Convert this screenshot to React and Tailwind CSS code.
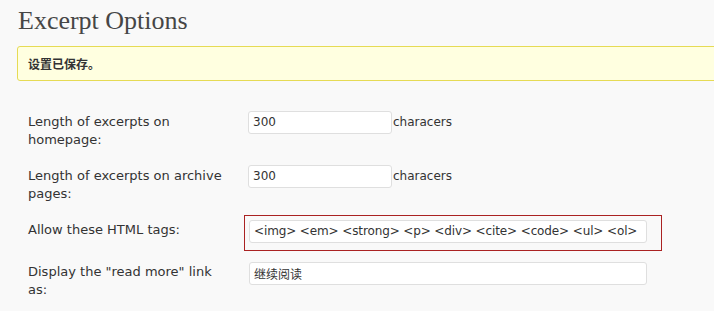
export default function App() {
  const sans = { fontFamily: '"DejaVu Sans", Verdana, "Noto Sans CJK SC", sans-serif' };
  return (
    <div className="w-[714px] h-[311px] overflow-hidden bg-[#f9f9f9] text-[#333]" style={sans}>
      <h2 className="pl-[18px] pt-[4px] h-[46px] text-[26px] leading-[34px] text-[#464646]" style={{ fontFamily: '"Liberation Serif", Georgia, serif' }}>
        Excerpt Options
      </h2>
      <div className="ml-[17px] -mr-[6px] h-[35px] rounded-[3px] border border-[#e6db55] bg-[#ffffe0] pl-[10px] flex items-center">
        <span className="text-[12px] font-bold text-[#333]" style={{ fontFamily: '"Noto Sans CJK SC", sans-serif' }}>设置已保存。</span>
      </div>

      <div className="mt-[30px] flex flex-col">
        <div className="flex h-[54px]">
          <div className="ml-[28px] w-[200px] mt-[2px] text-[13px] leading-[18px]">Length of excerpts on homepage:</div>
          <div className="ml-[20px] flex items-start">
            <div className="w-[144px] h-[23px] rounded-[3px] border border-[#dfdfdf] bg-white pl-[4px] text-[12px] leading-[21px]">300</div>
            <span className="ml-[1px] text-[12px] leading-[23px]">characers</span>
          </div>
        </div>
        <div className="flex h-[50px]">
          <div className="ml-[28px] w-[200px] mt-[2px] text-[13px] leading-[18px]">Length of excerpts on archive pages:</div>
          <div className="ml-[20px] flex items-start">
            <div className="w-[144px] h-[23px] rounded-[3px] border border-[#dfdfdf] bg-white pl-[4px] text-[12px] leading-[21px]">300</div>
            <span className="ml-[1px] text-[12px] leading-[23px]">characers</span>
          </div>
        </div>
        <div className="flex h-[47px]">
          <div className="ml-[28px] w-[200px] mt-[6px] text-[13px] leading-[18px]">Allow these HTML tags:</div>
          <div className="ml-[16px]">
            <div className="w-[418px] h-[36px] border border-[#aa2222] pt-[4px] pl-[4px]">
              <div className="w-[398px] h-[23px] rounded-[3px] border border-[#dfdfdf] bg-white pl-[4px] text-[12px] leading-[21px] tracking-[-0.12px] whitespace-pre overflow-hidden">{'<img> <em> <strong> <p> <div> <cite> <code> <ul> <ol>'}</div>
            </div>
          </div>
        </div>
        <div className="flex">
          <div className="ml-[28px] w-[200px] mt-[1px] text-[13px] leading-[18px]">Display the "read more" link as:</div>
          <div className="ml-[21px]">
            <div className="w-[398px] h-[23px] rounded-[3px] border border-[#dfdfdf] bg-white pl-[4px] text-[12px] leading-[21px]" style={{ fontFamily: '"Noto Sans CJK SC", sans-serif' }}>继续阅读</div>
          </div>
        </div>
      </div>
    </div>
  );
}
